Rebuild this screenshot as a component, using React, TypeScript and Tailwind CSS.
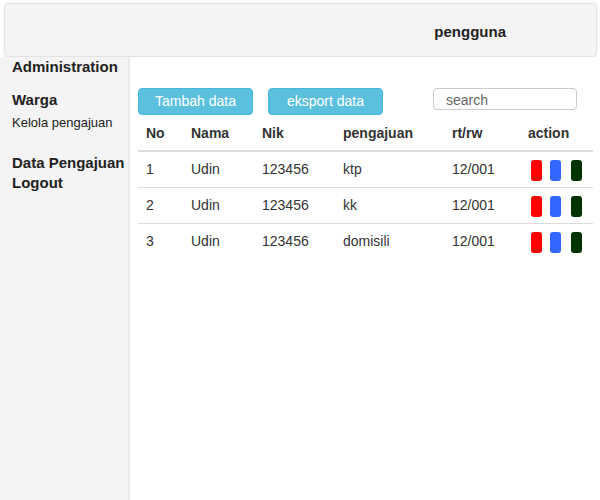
import React from "react";

const rows = [
  { no: "1", nama: "Udin", nik: "123456", pengajuan: "ktp", rtrw: "12/001" },
  { no: "2", nama: "Udin", nik: "123456", pengajuan: "kk", rtrw: "12/001" },
  { no: "3", nama: "Udin", nik: "123456", pengajuan: "domisili", rtrw: "12/001" },
];

export default function App() {
  return (
    <div
      className="w-[600px] h-[500px] bg-white flex flex-col overflow-hidden text-[#333]"
      style={{ fontFamily: '"Liberation Sans", Arial, sans-serif' }}
    >
      <div className="ml-[4px] mr-[3px] mt-[3px] h-[54px] shrink-0 bg-[#f4f4f4] border border-[#e3e3e3] rounded-[4px] shadow-[0_-1px_3px_rgba(0,0,0,0.06)] flex items-center justify-end pr-[90px] pt-[4px]">
        <span className="text-[15px] font-bold text-[#222]">pengguna</span>
      </div>
      <div className="flex flex-1 min-h-0">
        <div className="w-[130px] shrink-0 bg-[#f4f4f4] border-r-2 border-[#ebebeb] pl-[12px] text-[#222]">
          <div className="text-[15px] font-bold leading-[20px]">Administration</div>
          <div className="text-[15px] font-bold leading-[20px] mt-[13px]">Warga</div>
          <div className="text-[13px] leading-[18px] mt-[4px]">Kelola pengajuan</div>
          <div className="text-[15px] font-bold leading-[20px] mt-[21px]">Data Pengajuan</div>
          <div className="text-[15px] font-bold leading-[20px]">Logout</div>
        </div>
        <div className="flex-1 pt-[31px] pl-[8px]">
          <div className="flex items-start">
            <button className="w-[115px] h-[27px] bg-[#5bc0de] border border-[#46b8da] rounded-[4px] text-white text-[14px]">
              Tambah data
            </button>
            <button className="ml-[15px] w-[115px] h-[27px] bg-[#5bc0de] border border-[#46b8da] rounded-[4px] text-white text-[14px]">
              eksport data
            </button>
            <input
              placeholder="search"
              className="ml-[50px] w-[144px] h-[22px] border border-[#cccccc] rounded-[4px] pl-[12px] pt-[1px] text-[14px] placeholder:text-[#666] outline-none"
            />
          </div>
          <table className="w-[455px] border-collapse text-[14px] table-fixed">
            <colgroup>
              <col className="w-[45px]" />
              <col className="w-[71px]" />
              <col className="w-[81px]" />
              <col className="w-[109px]" />
              <col className="w-[76px]" />
              <col className="w-[73px]" />
            </colgroup>
            <thead>
              <tr className="h-[36px] border-b-2 border-[#dddddd]">
                {["No", "Nama", "Nik", "pengajuan", "rt/rw", "action"].map((h) => (
                  <th key={h} className="text-left font-bold px-[8px] pt-[1px] text-[#333]">
                    {h}
                  </th>
                ))}
              </tr>
            </thead>
            <tbody>
              {rows.map((r, i) => (
                <tr
                  key={r.no}
                  className={i < rows.length - 1 ? "h-[36px] border-b border-[#dddddd]" : "h-[36px]"}
                >
                  <td className="px-[8px]">{r.no}</td>
                  <td className="px-[8px]">{r.nama}</td>
                  <td className="px-[8px]">{r.nik}</td>
                  <td className="px-[8px]">{r.pengajuan}</td>
                  <td className="px-[8px]">{r.rtrw}</td>
                  <td className="px-[8px]">
                    <div className="flex items-center pl-[3px] pt-[3px]">
                      <span className="block w-[11px] h-[21px] rounded-[3px] bg-[#ff0000]" />
                      <span className="block w-[11px] h-[21px] rounded-[3px] bg-[#3366ff] ml-[8px]" />
                      <span className="block w-[11px] h-[21px] rounded-[3px] bg-[#003300] ml-[10px]" />
                    </div>
                  </td>
                </tr>
              ))}
            </tbody>
          </table>
        </div>
      </div>
    </div>
  );
}
